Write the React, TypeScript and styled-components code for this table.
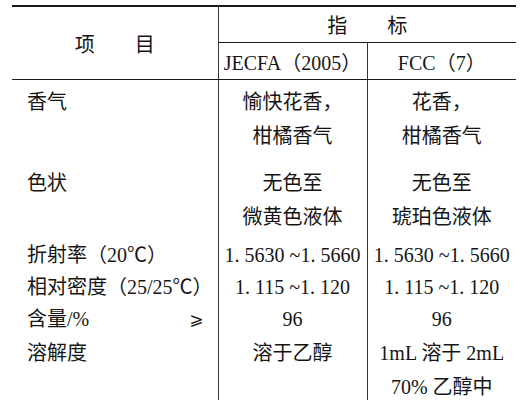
import React from "react";
import styled, { createGlobalStyle } from "styled-components";

const GlobalStyle = createGlobalStyle`
  body {
    margin: 0;
    background: #ffffff;
    color: #151515;
    font-family: "Liberation Serif", "Noto Sans CJK SC", serif;
  }
`;

interface Row {
    name: string;
    suffix?: string;
    jecfa: string[];
    fcc: string[];
    top: number;
    bottom: number;
    lh: number;
}

const rows: Row[] = [
    { name: "香气", jecfa: ["愉快花香，", "柑橘香气"], fcc: ["花香，", "柑橘香气"], top: 5, bottom: 8, lh: 34 },
    { name: "色状", jecfa: ["无色至", "微黄色液体"], fcc: ["无色至", "琥珀色液体"], top: 5, bottom: 4, lh: 34 },
    { name: "折射率（20℃）", jecfa: ["1. 5630 ~1. 5660"], fcc: ["1. 5630 ~1. 5660"], top: 1, bottom: 0, lh: 32 },
    { name: "相对密度（25/25℃）", jecfa: ["1. 115 ~1. 120"], fcc: ["1. 115 ~1. 120"], top: 0, bottom: 0, lh: 32 },
    { name: "含量/%", suffix: "⩾", jecfa: ["96"], fcc: ["96"], top: 0, bottom: 1, lh: 32 },
    { name: "溶解度", jecfa: ["溶于乙醇"], fcc: ["1mL 溶于 2mL", "70% 乙醇中"], top: 0, bottom: 0, lh: 34 },
];

function App() {
    return (
        <>
            <GlobalStyle />
            <Page>
                <Table>
                    <colgroup>
                        <col style={{ width: 206 }} />
                        <col style={{ width: 149 }} />
                        <col style={{ width: 149 }} />
                    </colgroup>
                    <thead>
                        <tr>
                            <HeadCell rowSpan={2} $h={72}>项　　目</HeadCell>
                            <HeadCell colSpan={2} $h={35} $divider>指　　标</HeadCell>
                        </tr>
                        <tr>
                            <HeadCell $h={36} $divider>JECFA（2005）</HeadCell>
                            <HeadCell $h={36} $divider>FCC（7）</HeadCell>
                        </tr>
                    </thead>
                    <tbody>
                        {rows.map((row) => (
                            <tr key={row.name}>
                                <NameCell $top={row.top} $bottom={row.bottom} $lh={row.lh}>
                                    <NameLine>
                                        <span>{row.name}</span>
                                        {row.suffix && <Relation>{row.suffix}</Relation>}
                                    </NameLine>
                                </NameCell>
                                <ValueCell $top={row.top} $bottom={row.bottom} $lh={row.lh}>
                                    {row.jecfa.map((line) => (
                                        <div key={line}>{line}</div>
                                    ))}
                                </ValueCell>
                                <ValueCell $top={row.top} $bottom={row.bottom} $lh={row.lh}>
                                    {row.fcc.map((line) => (
                                        <div key={line}>{line}</div>
                                    ))}
                                </ValueCell>
                            </tr>
                        ))}
                    </tbody>
                </Table>
            </Page>
        </>
    );
}

const Page = styled.div`
  width: 521px;
  height: 400px;
  overflow: hidden;
  padding: 5px 0 0 12px;
  box-sizing: border-box;
`;

const Table = styled.table`
  width: 504px;
  table-layout: fixed;
  border-collapse: collapse;
  border-top: 2px solid #1a1a1a;
  font-size: 20px;
`;

const HeadCell = styled.th<{ $h: number; $divider?: boolean }>`
  height: ${(p) => p.$h}px;
  padding: 0;
  font-weight: normal;
  text-align: center;
  vertical-align: middle;
  white-space: nowrap;
  border-bottom: 1px solid #1a1a1a;
  border-left: ${(p) => (p.$divider ? "1px solid #333" : "none")};
`;

const NameCell = styled.td<{ $top: number; $bottom: number; $lh: number }>`
  padding: ${(p) => p.$top}px 14px ${(p) => p.$bottom}px 15px;
  line-height: ${(p) => p.$lh}px;
  vertical-align: top;
  white-space: nowrap;
`;

const NameLine = styled.div`
  display: flex;
  justify-content: space-between;
`;

const Relation = styled.span`
  font-family: "DejaVu Sans", sans-serif;
  font-size: 17px;
`;

const ValueCell = styled.td<{ $top: number; $bottom: number; $lh: number }>`
  padding: ${(p) => p.$top}px 0 ${(p) => p.$bottom}px;
  line-height: ${(p) => p.$lh}px;
  text-align: center;
  vertical-align: top;
  white-space: nowrap;
  border-left: 1px solid #333;
`;

export default App;
